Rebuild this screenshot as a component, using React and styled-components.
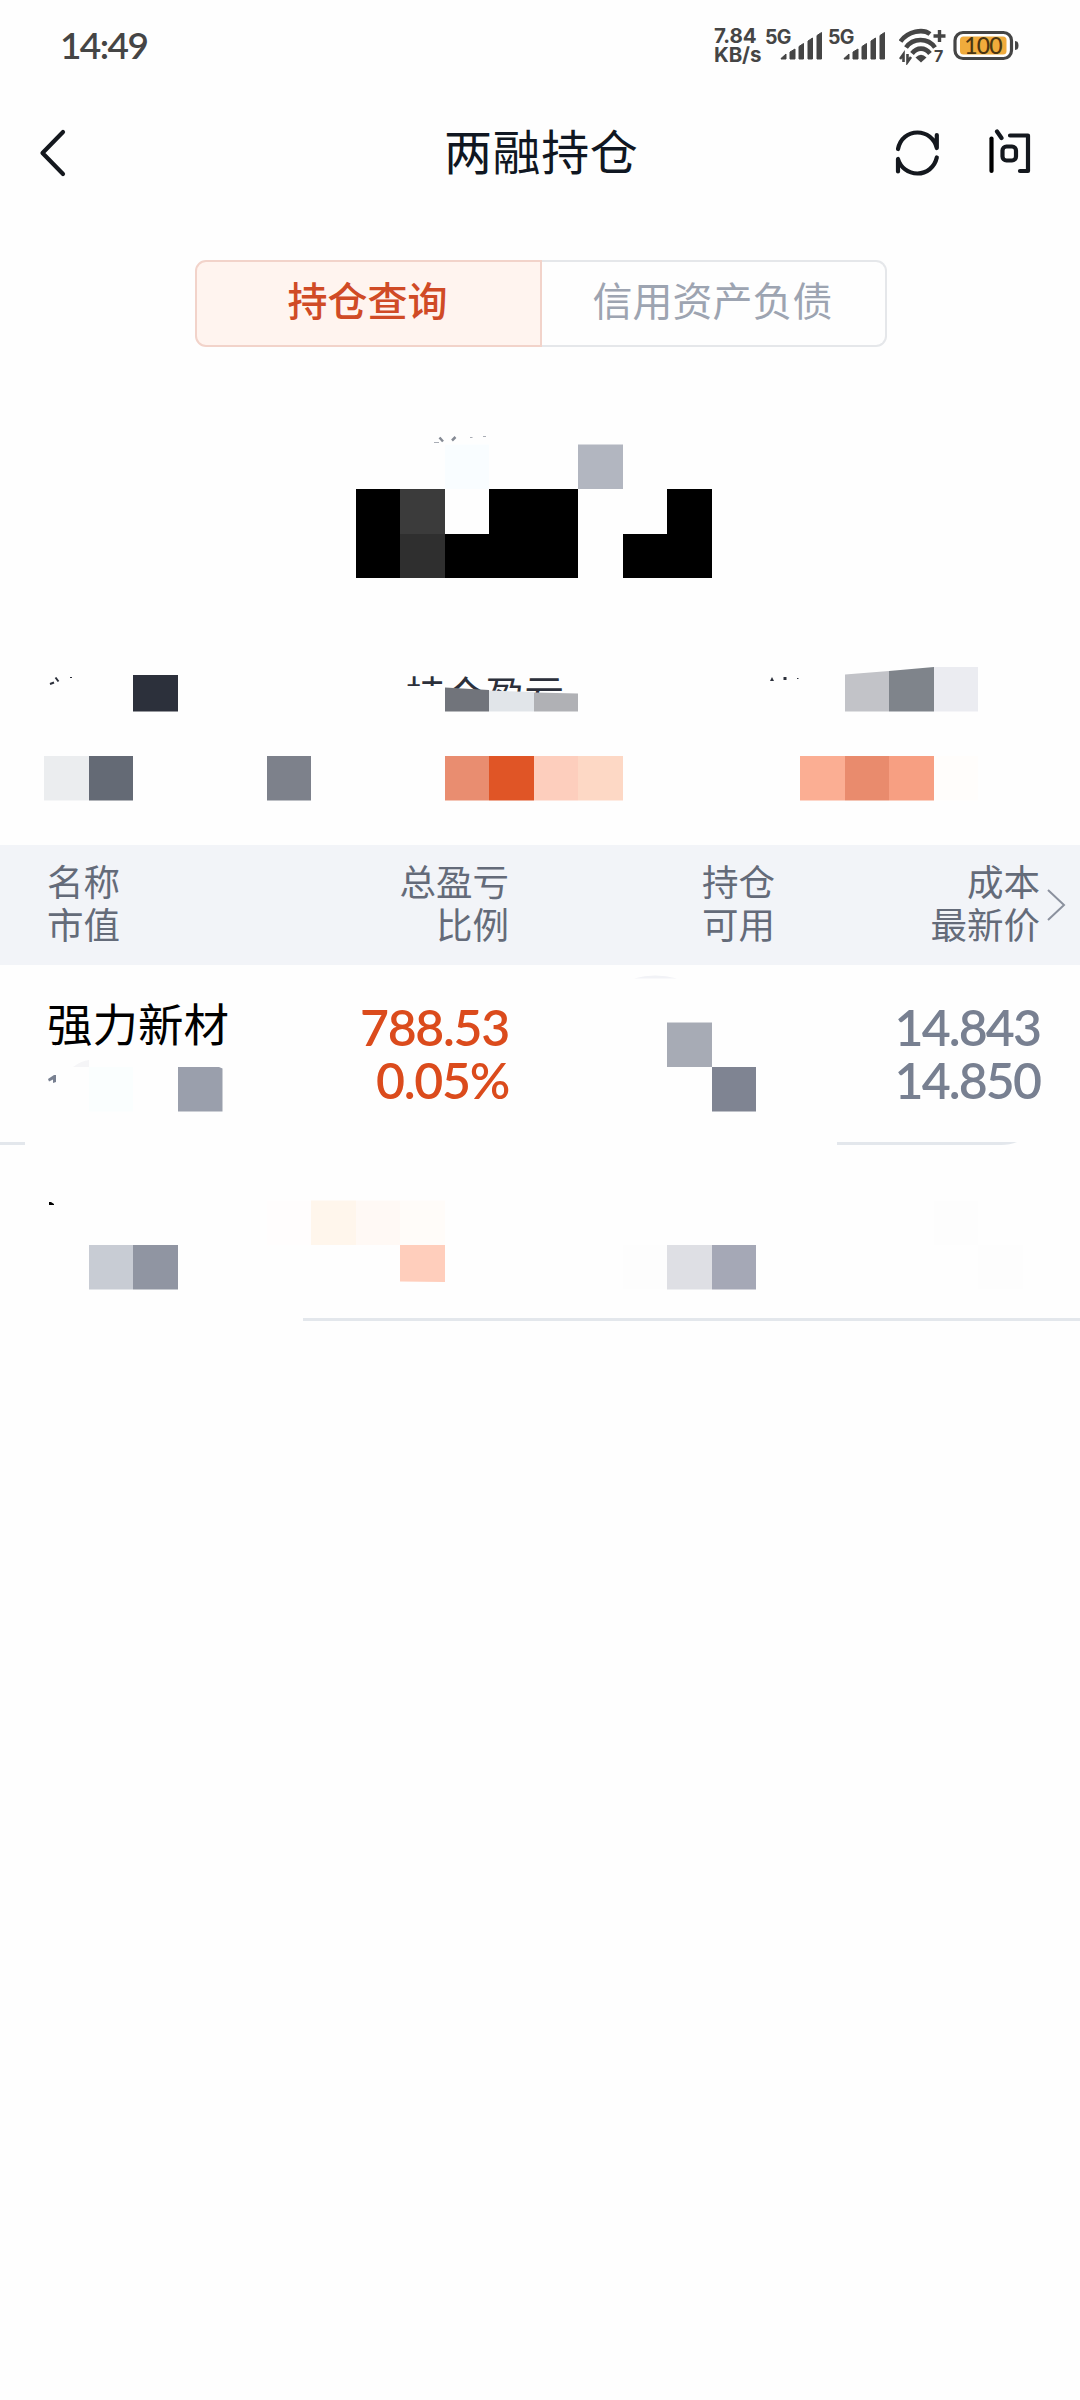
import React from 'react'
import styled, { createGlobalStyle } from 'styled-components'

const GlobalStyle = createGlobalStyle`
  * {
    box-sizing: border-box;
  }
  body {
    margin: 0;
    background: #fefefe;
    font-family: Lato, "Noto Sans CJK SC", sans-serif;
  }
`

const Page = styled.main`
  width: 1080px;
  min-height: 2400px;
  background: #fefefe;
`

const StatusBar = styled.div`
  display: flex;
  justify-content: space-between;
  height: 92px;
  padding: 0 61px 0 60px;
  color: #454545;
`

const Clock = styled.div`
  padding-top: 23px;
  font-size: 37px;
  line-height: 44px;
  font-weight: 600;
  letter-spacing: -1.6px;
`

const StatusIcons = styled.div`
  display: flex;
  align-items: flex-start;
  padding-top: 27px;
  font-family: Inter, sans-serif;
  font-weight: 700;
`

const Speed = styled.div`
  width: 51px;
  font-size: 20.5px;
  line-height: 18.5px;
  letter-spacing: -0.1px;
  white-space: nowrap;
`

const Network = styled.div`
  display: flex;
  width: 63px;
  font-size: 19.5px;
  line-height: 20px;
  letter-spacing: -0.6px;
`

const SignalIcon = styled.svg`
  flex: none;
  margin: 4px 0 0 -11px;
`

const WifiIcon = styled.svg`
  margin: 0 7px 0 8px;
`

const Header = styled.header`
  display: grid;
  grid-template-columns: 406px auto 1fr;
  align-items: center;
  height: 122px;
  padding: 0 48px 0 38px;
`

const Title = styled.h1`
  margin: 0;
  padding-bottom: 2px;
  color: #101722;
  font-size: 48px;
  line-height: 60px;
  font-weight: 400;
  letter-spacing: 0.6px;
`

const Actions = styled.div`
  display: flex;
  justify-content: flex-end;
  gap: 46px;
`

const Tabs = styled.div`
  display: flex;
  width: 692px;
  height: 87px;
  margin: 46px 0 0 195px;
`

const Tab = styled.button`
  flex: 1;
  padding: 0 2px 9px 0;
  border: 2px solid ${props => props.$active ? '#f2d3ca' : '#e5e7ea'};
  border-width: ${props => props.$active ? '2px' : '2px 2px 2px 0'};
  border-radius: ${props => props.$active ? '11px 0 0 11px' : '0 11px 11px 0'};
  background: ${props => props.$active ? '#fff4ef' : 'transparent'};
  color: ${props => props.$active ? '#d04b26' : '#9da4b1'};
  font-family: inherit;
  font-size: 40px;
  font-weight: ${props => props.$active ? 500 : 400};
`

const Assets = styled.section`
  position: relative;
  height: 283px;
`

const Summary = styled.section`
  position: relative;
  display: grid;
  grid-template-columns: 1fr 1fr 1fr;
  height: 215px;
`

const SummaryLabel = styled.div`
  grid-column: 2;
  padding: 37px 0 0 46px;
  color: #2c303b;
  font-size: 39.5px;
  line-height: 56px;
  clip-path: polygon(45px 0, 100% 0, 100% 65px, 218px 65px, 85px 59px, 82px 56px, 45px 56px);
`

const Overlay = styled.svg`
  position: absolute;
  inset: 0;
  width: 100%;
  height: 100%;
`

const Columns = styled.div`
  position: relative;
  display: grid;
  grid-template-columns: 192px 270px 266px 265px;
  padding-left: 47px;
`

const TableHead = styled(Columns)`
  height: 120px;
  padding-top: 16px;
  background: #f2f4f8;
  color: #646b79;
  font-size: 36.5px;
  line-height: 43px;
`

const MoreArrow = styled.svg`
  position: absolute;
  right: 14px;
  top: 43px;
`

const Row = styled(Columns)`
  height: ${props => props.$height}px;
`

const Cell = styled.div`
  text-align: ${props => props.$left ? 'left' : 'right'};
`

const StockName = styled.div`
  padding-top: 28px;
  color: #000;
  font-size: 45.5px;
  line-height: 64px;
  white-space: nowrap;
`

const Figures = styled.div`
  padding-top: 36px;
  color: ${props => props.$up ? '#db4b1c' : '#788091'};
  font-size: 50px;
  line-height: 53px;
  font-weight: 600;
  letter-spacing: ${props => props.$up ? '-1.3px' : '-1.9px'};
  text-align: right;
`

const U = 44.47

// blocks are [column, top, color, height?, columns?] on the mosaic grid
const Mosaic = ({ top, height, blocks, children }) => (
  <Overlay viewBox={`0 ${top} 1080 ${height}`}>
    {blocks.map(([col, y, color, h = 44.5, n = 1], i) => (
      <rect key={i} x={Math.round(col * U)} y={y} width={Math.round((col + n) * U) - Math.round(col * U)} height={h} fill={color} />
    ))}
    {children}
  </Overlay>
)

const assetBlocks = [
  [10, 444.5, '#f9fdff'],
  [13, 444.5, '#b2b6c0'],
  [8, 489, '#000', 89],
  [9, 489, '#3b3b3b', 45],
  [9, 534, '#2f2f2f', 44],
  [10, 534, '#000', 44],
  [11, 489, '#000', 89, 2],
  [14, 534, '#000', 44],
  [15, 489, '#000', 89],
]

const summaryBlocks = [
  [3, 675, '#2c303b', 36.5],
  [21, 667, '#ebecf1'],
  [1, 756, '#ebedef'],
  [2, 756, '#646a75'],
  [6, 756, '#7d818b'],
  [10, 756, '#e98d70'],
  [11, 756, '#e05526'],
  [12, 756, '#fdcebd'],
  [13, 756, '#fdd8c5'],
  [18, 756, '#fbae93'],
  [19, 756, '#e98b6d'],
  [20, 756, '#f79f82'],
  [21, 756, '#fffdfb'],
]

const firstRowBlocks = [
  [2, 1067, '#fafefe'],
  [15, 1022.5, '#a7abb5'],
  [16, 1067, '#7f8492'],
]

const secondRowBlocks = [
  [6, 1200.5, '#fffdfd'],
  [7, 1200.5, '#fff6ec'],
  [8, 1200.5, '#fff9f5'],
  [9, 1200.5, '#fffcf9'],
  [2, 1245, '#c8ccd4'],
  [3, 1245, '#9095a2'],
  [14, 1245, '#fdfdfd'],
  [15, 1245, '#dedfe4'],
  [16, 1245, '#a5a8b6'],
  [21, 1200.5, '#fdfdfd'],
  [22, 1245, '#fdfdfd'],
]

const Signal = () => (
  <SignalIcon width="43" height="30" viewBox="0 0 43 30" fill="currentColor" stroke="currentColor" strokeWidth="1" strokeLinejoin="round">
    <path d="M1 27.5 6 23v5H1zM10 21l5-3v10h-5zM19 15.500l4.500-3V28H19zM28 10l4.500-3v21H28zM37 4.500l4.500-3V28H37z" />
  </SignalIcon>
)

const Wifi = () => (
  <WifiIcon width="47" height="38" viewBox="0 0 47 38" fill="none" stroke="currentColor" strokeWidth="4.600">
    <path d="M1.500 14.500C9 4 24 1.500 31 7" />
    <path d="M7 20.500C14 10.500 29 10.500 36 20.500" />
    <path d="M13 26.500C18 20 26 20 31 26.500" />
    <path d="M16.500 30.500q5.500-5.500 11 0l-5.500 5z" fill="currentColor" stroke="none" />
    <path d="M40.500 3v12M34.500 9h12" strokeWidth="3.400" />
    <path d="M4.500 35v-8l-3.500 5M8.500 27v8l3.500-5" strokeWidth="2.600" />
    <text x="35" y="34.500" fontSize="16" fill="currentColor" stroke="none">7</text>
  </WifiIcon>
)

const Battery = () => (
  <svg width="66" height="38" viewBox="0 0 66 38">
    <rect x="2" y="5.500" width="56.500" height="26" rx="8" fill="none" stroke="#454545" strokeWidth="3.200" />
    <rect x="7" y="9.500" width="46.500" height="18" rx="3.500" fill="#f0ab3c" />
    <path d="M62 14q3.500 0 3.500 4.500t-3.500 4.500z" fill="#454545" />
    <text x="30" y="26.500" textAnchor="middle" fontFamily="Lato" fontSize="23" fontWeight="500" letterSpacing="-0.800" fill="#4a3512">100</text>
  </svg>
)

const BackIcon = () => (
  <svg width="30" height="48" viewBox="0 0 30 48" fill="none" stroke="#14181e" strokeWidth="4.200" strokeLinecap="round" strokeLinejoin="round">
    <path d="M25 3 4.500 24 25 45" />
  </svg>
)

const RefreshIcon = () => (
  <svg width="46" height="48" viewBox="0 0 46 48" fill="none" stroke="#14181e" strokeWidth="4.200" strokeLinecap="round" strokeLinejoin="round">
    <path d="M4 20C6 9.500 14 3.500 23.500 3.500c9 0 17 6 19.300 15.500V6" />
    <path d="M42.800 28.500C40.500 38.500 32.500 44.500 23.500 44.500 14 44.500 6.500 38.500 4 30v12.500" />
  </svg>
)

const AskIcon = () => (
  <svg width="46" height="48" viewBox="0 0 46 48" fill="none" stroke="#14181e" strokeWidth="4.200" strokeLinecap="round" strokeLinejoin="round">
    <path d="M5.500 9.500V42" stroke="#000" />
    <path d="m11 2.500 4.500 6.500M24 6.500h18v35.500h-8" />
    <rect x="16.500" y="17.500" width="13.500" height="14" rx="4" />
  </svg>
)

const columns = [['名称', '市值'], ['总盈亏', '比例'], ['持仓', '可用'], ['成本', '最新价']]

const App = () => (
  <Page>
    <GlobalStyle />
    <StatusBar>
      <Clock>14:49</Clock>
      <StatusIcons>
        <Speed>7.84<br />KB/s</Speed>
        <Network>5G<Signal /></Network>
        <Network>5G<Signal /></Network>
        <Wifi />
        <Battery />
      </StatusIcons>
    </StatusBar>
    <Header>
      <BackIcon />
      <Title>两融持仓</Title>
      <Actions>
        <RefreshIcon />
        <AskIcon />
      </Actions>
    </Header>
    <Tabs>
      <Tab $active>持仓查询</Tab>
      <Tab>信用资产负债</Tab>
    </Tabs>
    <Assets>
      <Mosaic top={347} height={283} blocks={assetBlocks}>
        <path d="M439.500 437.500l3.500 4M452 440.500l3.500-3.500" stroke="#858a94" strokeWidth="2.500" />
        <path d="M434 442.500h5M470 437.500h2.500M483 436.500h3" stroke="#a9adb5" strokeWidth="1" />
      </Mosaic>
    </Assets>
    <Summary>
      <SummaryLabel>持仓盈亏</SummaryLabel>
      <Mosaic top={630} height={215} blocks={summaryBlocks}>
        <path d="M445 687.500 489 690V711.500H445z" fill="#71747b" />
        <path d="M489 690.500 534 692V711.500H489z" fill="#e1e5e9" />
        <path d="M534 692.500 578 693.500V711.500H534z" fill="#b0b1b5" />
        <path d="M845 674.500 889 671V711.500H845z" fill="#c2c3c8" />
        <path d="M889 671 934 667V711.500H889z" fill="#7f848b" />
        <path d="M50 684l4-1.500M55.500 677.500l3 4" stroke="#2c303b" strokeWidth="2" />
        <path d="M770 681l2-4 2 4zM783.500 677h3v3h-3z" fill="#2c303b" />
        <path d="M70 677.500h2M797 678.500h1.500" stroke="#2c303b" />
      </Mosaic>
    </Summary>
    <TableHead>
      {columns.map(([first, second], i) => (
        <Cell key={first} $left={i === 0}>{first}<br />{second}</Cell>
      ))}
      <MoreArrow width="20" height="34" viewBox="0 0 20 34" fill="none" stroke="#8b919e" strokeWidth="2">
        <path d="M2 2 18 17 2 32" />
      </MoreArrow>
    </TableHead>
    <Row $height={180}>
      <StockName>强力新材</StockName>
      <Figures $up>788.53<br />0.05%</Figures>
      <div />
      <Figures>14.843<br />14.850</Figures>
      <Mosaic top={965} height={180} blocks={firstRowBlocks}>
        <path d="M634 978.500q21-6 43 0z" fill="#f1f2f6" />
        <path d="M73 1067q8-6 16-7v7z" fill="#f5f5f7" />
        <path d="M48 1079 54 1075h2v7l-3 1v-3.500l-4 2z" fill="#788091" />
        <path d="M178 1067h41l3.500 1.500v43H178z" fill="#9a9fac" />
        <path d="M0 1142h25v3H0zM837 1142h180q-7 3-16 3H837z" fill="#e3e7ec" />
      </Mosaic>
    </Row>
    <Row $height={176}>
      <Mosaic top={1145} height={176} blocks={secondRowBlocks}>
        <path d="M49 1202h2l3 2v1h-5z" fill="#000" />
        <path d="M400 1245h45v37l-45-.500z" fill="#ffcebc" />
        <path d="M303 1318h777v3H303z" fill="#e3e7ec" />
      </Mosaic>
    </Row>
  </Page>
)

export default App
